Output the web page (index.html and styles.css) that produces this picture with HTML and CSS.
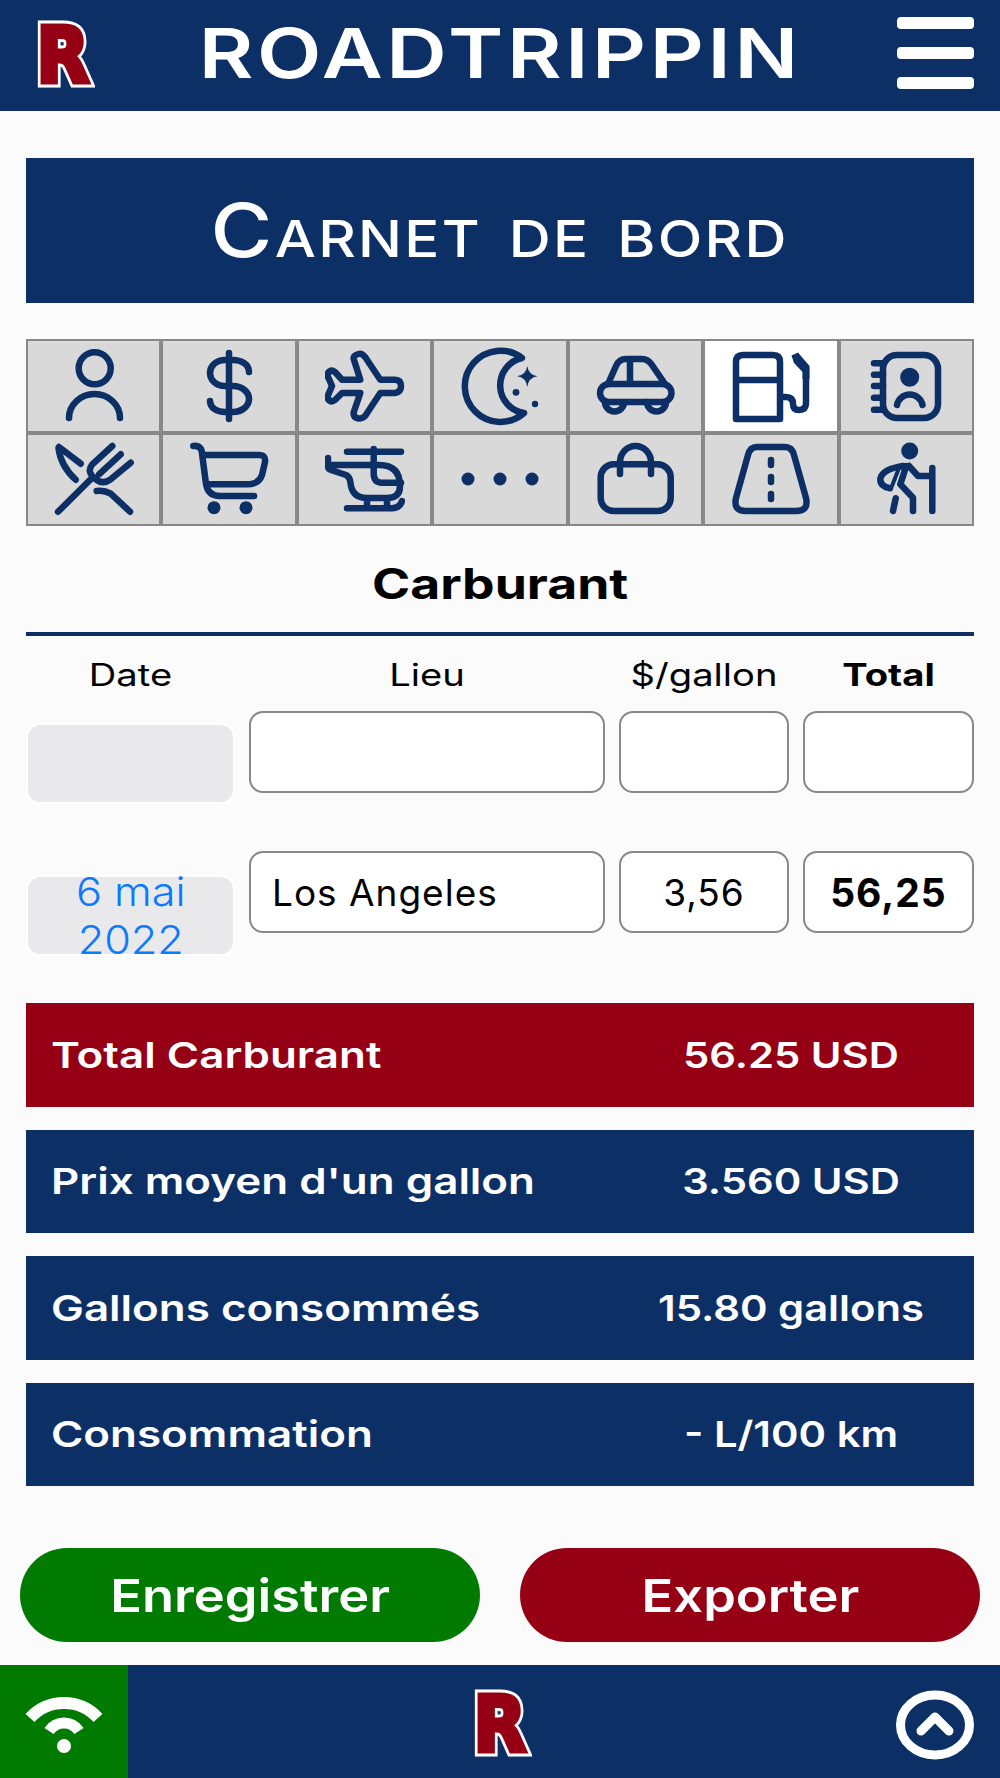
FILE: index.html
```html
<!DOCTYPE html>
<html lang="fr">
<head>
    <title>Roadtrippin - Carnet de bord</title>
    <link rel="stylesheet" href="styles.css">
</head>
<body>
    <header class="top-bar">
        <span class="logo">R</span>
        <div class="app-name">ROADTRIPPIN</div>
        <div class="burger"><span></span><span></span><span></span></div>
    </header>

    <main class="content">
        <h1 class="page-title"><span class="wide"><span class="big-c">C</span>arnet de bord</span></h1>

        <div class="tabs">
            <div class="tab"><svg viewBox="0 0 80 80"><circle cx="40.7" cy="22.3" r="16"/><path d="M15 72 A25.5 24 0 0 1 66 72"/></svg></div>
            <div class="tab"><svg viewBox="0 0 80 80"><path d="M40 7 V73 M60 26 C60 18 52 14 44 14 H36 C27 14 21 20 21 27 C21 34 27 40 36 40 H44 C53 40 60 46 60 53 C60 60 53 66 44 66 H36 C28 66 21 62 21 55"/></svg></div>
            <div class="tab"><svg viewBox="0 0 80 80"><path d="M70 33.7 H55.3 L40.3 11.3 Q37 7 33.5 8 Q28 9.5 28.7 13 L35.3 33.7 H17 L10 26 Q6 23 3 27 Q2 30 4 33 L7 40 L4 47 Q2 51 3 53 Q6 57 10 54 L17 47 H35.3 L28.7 66.3 Q28 71 33 72.5 Q37 73 40.3 69.7 L55.3 47 H70 Q76 46 76 40 Q76 34 70 33.7 Z"/></svg></div>
            <div class="tab"><svg viewBox="0 0 80 80"><path d="M62 12 A35.6 35.6 0 1 0 64 67 A28 28 0 0 1 62 12 Z"/><path class="solid" d="M67.3 20 Q68.5 29 77.5 30.3 Q68.5 31.5 67.3 41 Q66 31.5 57 30.3 Q66 29 67.3 20 Z"/><circle class="solid" cx="56" cy="46.3" r="3.4"/><circle class="solid" cx="75" cy="58" r="3.2"/></svg></div>
            <div class="tab"><svg viewBox="0 0 80 80"><rect x="5" y="38" width="71.5" height="18" rx="9"/><path d="M13 38 L21 20 Q24 13 31 13 H47 Q53 13 57 19 L70 38 M35 13 V37 M10 56 A9.5 9.5 0 0 0 29 56 M52 56 A9.5 9.5 0 0 0 71 56"/></svg></div>
            <div class="tab active"><svg viewBox="0 0 80 80"><path d="M5 73 V16 Q5 9 12 9 H42 Q49 9 49 16 V73 Z M5 34 H49 M50 51 H55 Q62 51 62 58 Q62 64 68 64 Q75 64 75 57 V24"/><path class="solid" d="M60.5 9.5 L67 6.5 L78.5 20 V33 H71.5 V26 L63 17 Z"/></svg></div>
            <div class="tab"><svg viewBox="0 0 80 80"><rect x="17" y="9" width="55" height="63" rx="14"/><path d="M8 17.3 H17 M8 28.7 H17 M8 40 H17 M8 51.7 H17 M8 63.7 H17 M31 59 A13 13 0 0 1 56.5 59"/><circle class="solid" cx="43.7" cy="31.3" r="9.5"/></svg></div>

            <div class="tab"><svg viewBox="0 0 80 80"><path d="M5 8 L26.7 24.7 M4.5 9 Q6.7 27 21.7 40.7 M42.7 52 Q50 51 56.7 54.7 L76 72.7 M4 72.7 L36.7 40.3 M58.3 7 L38.3 25.3 Q32 33 41.7 40.3 Q49 46 56.7 40.3 L76.7 23.7 M66.7 15.3 L45 35.3"/></svg></div>
            <div class="tab"><svg viewBox="0 0 80 80"><path d="M4.3 7 Q11 6 12.7 12 L17 45 Q19 57 31 57 H65 M14.3 16 H70 Q77 16 76 23 L73 36 Q70 45.3 58 45.3 H17.7"/><circle class="solid" cx="25" cy="68.7" r="6.5"/><circle class="solid" cx="57" cy="68.7" r="6.5"/></svg></div>
            <div class="tab"><svg viewBox="0 0 80 80"><path d="M22 12.7 H76 M48.7 10 V35 Q49 43.7 57 43.7 H76 M3 19 V27 Q3 30 6 31 L21 36 Q25 38 25.5 44 Q27 59 42 59 H62 Q75 59 75 47 Q75 26 54 26 H3 M22 69.3 H67 Q75 69 77 62 M42 59 V69 M62 59 V69"/></svg></div>
            <div class="tab"><svg viewBox="0 0 80 80"><circle class="solid" cx="8" cy="40" r="6.5"/><circle class="solid" cx="40" cy="40" r="6.5"/><circle class="solid" cx="72" cy="40" r="6.5"/></svg></div>
            <div class="tab"><svg viewBox="0 0 80 80"><rect x="5.7" y="25.3" width="70" height="46.7" rx="13"/><path d="M25 35 V23 A15.5 16 0 0 1 56 23 V35"/></svg></div>
            <div class="tab"><svg viewBox="0 0 80 80"><path d="M26 8 H54 Q61 8 63 16 L75 59 Q78 72 65 72 H15 Q2 72 5 59 L17 16 Q19 8 26 8 Z M40 21 V26 M40 38 V43 M40 55 V60"/></svg></div>
            <div class="tab"><svg viewBox="0 0 80 80"><path d="M66.3 29 V72 M37 27 Q17 30 14.5 39 Q13 47 24 49.3 M40.3 27 L34.3 45.3 L47 58.7 V72 M43 27 L52 37 H65 M29.7 59.3 L27 72"/><path class="thin" d="M33 29 L26 47"/><circle class="solid" cx="43.7" cy="12" r="8.5"/></svg></div>
        </div>

        <h2 class="section-title"><span class="wide">Carburant</span></h2>

        <div class="table-head">
            <div>Date</div>
            <div>Lieu</div>
            <div>$/gallon</div>
            <div class="strong">Total</div>
        </div>

        <div class="row">
            <div class="date-box first"></div>
            <input class="field" type="text" value="">
            <input class="field" type="text" value="">
            <input class="field" type="text" value="">
        </div>

        <div class="row next">
            <div class="date-box second"><span class="date-text">6 mai<br>2022</span></div>
            <input class="field place" type="text" value="Los Angeles">
            <input class="field" type="text" value="3,56">
            <input class="field strong" type="text" value="56,25">
        </div>

        <div class="summary">
            <div class="sum-row red"><span class="sum-label">Total Carburant</span><span class="sum-value">56.25 USD</span></div>
            <div class="sum-row"><span class="sum-label">Prix moyen d'un gallon</span><span class="sum-value">3.560 USD</span></div>
            <div class="sum-row"><span class="sum-label">Gallons consommés</span><span class="sum-value">15.80 gallons</span></div>
            <div class="sum-row"><span class="sum-label">Consommation</span><span class="sum-value">- L/100 km</span></div>
        </div>

        <div class="actions">
            <button class="btn save"><span class="btn-text">Enregistrer</span></button>
            <button class="btn export"><span class="btn-text">Exporter</span></button>
        </div>
    </main>

    <footer class="bottom-bar">
        <div class="wifi">
            <svg viewBox="0 0 128 113" width="128" height="113"><path d="M30 53 A46 46 0 0 1 98 53" stroke-width="12"/><path d="M49 66 A18 18 0 0 1 79 66" stroke-width="11"/><circle cx="64" cy="81" r="7"/></svg>
        </div>
        <span class="logo">R</span>
        <div class="to-top">
            <svg viewBox="0 0 78 70" width="78" height="70"><ellipse cx="39" cy="35" rx="34.5" ry="30"/><path d="M25 41 L39 27 L53 41"/></svg>
        </div>
    </footer>
</body>
</html>
```

FILE: styles.css
```css
* {
    box-sizing: border-box;
}

body {
    margin: 0;
    background-color: #fbfbfb;
    font-family: Inter, "Liberation Sans", sans-serif;
    color: #000;
}

.top-bar {
    display: grid;
    grid-template-columns: 1fr auto 1fr;
    align-items: center;
    height: 111px;
    padding: 0 26px;
    background-color: #0c2f66;
}

/* the R is drawn twice: white halo behind, red letter on top */
.logo {
    position: relative;
    display: inline-flex;
    justify-content: center;
    justify-self: start;
    width: 56px;
    margin-left: 9px;
    font-family: "DejaVu Sans", sans-serif;
    font-size: 77px;
    font-weight: bold;
    line-height: 1;
    color: #950014;
    -webkit-text-stroke: 5px #950014;
    transform: scaleX(0.89);
}

.logo::before {
    content: "R";
    position: absolute;
    z-index: -1;
    -webkit-text-stroke: 11px #fff;
}

.bottom-bar .logo {
    justify-self: center;
    margin: 5px 0 0 0;
}

.app-name {
    font-size: 69px;
    font-weight: 600;
    line-height: 1;
    letter-spacing: 3px;
    margin-bottom: 5px;
    color: #fff;
    transform: scaleX(1.215);
}

.burger {
    display: flex;
    flex-direction: column;
    justify-self: end;
    gap: 18px;
    width: 77px;
    margin-bottom: 5px;
}

.burger span {
    height: 12px;
    border-radius: 4px;
    background-color: #fff;
}

.content {
    padding: 47px 26px 0;
}

.wide {
    display: inline-block;
}

.page-title {
    display: flex;
    justify-content: center;
    height: 145px;
    margin: 0;
    padding-top: 35px;
    background-color: #0c2f66;
    font-size: 51px;
    font-weight: 500;
    line-height: 1.3;
    letter-spacing: 2px;
    word-spacing: 8px;
    text-transform: uppercase;
    color: #fff;
}

.page-title .wide {
    transform: scaleX(1.14);
}

.big-c {
    font-size: 74px;
    line-height: 1;
}

.tabs {
    display: grid;
    grid-template-columns: repeat(7, 1fr);
    grid-auto-rows: 93.5px;
    margin-top: 36px;
}

.tab {
    display: flex;
    align-items: center;
    justify-content: center;
    border: 2.5px solid #888;
    background-color: #d9d9d9;
}

.tab.active {
    background-color: #fff;
}

.tab svg {
    width: 80px;
    height: 80px;
    fill: none;
    stroke: #0c2f66;
    stroke-width: 6.5;
    stroke-linecap: round;
    stroke-linejoin: round;
}

.tab svg .solid {
    fill: #0c2f66;
    stroke: none;
}

.tab svg .thin {
    stroke-width: 4;
}

.section-title {
    display: flex;
    align-items: center;
    justify-content: center;
    height: 110px;
    margin: 0;
    padding-top: 8px;
    border-bottom: 4px solid #0c2f66;
    font-size: 42px;
    font-weight: 700;
}

.section-title .wide {
    transform: scaleX(1.23);
}

.table-head,
.row {
    display: grid;
    grid-template-columns: 209px 356px 170px 171px;
    column-gap: 14px;
}

.table-head {
    align-items: center;
    height: 76px;
    font-size: 31px;
    text-align: center;
}

.table-head div {
    transform: scaleX(1.23);
}

.strong {
    font-weight: bold;
}

.row {
    height: 80px;
}

.row.next {
    margin-top: 60px;
}

.date-box {
    display: flex;
    align-items: center;
    justify-content: center;
    width: 209px;
    height: 81px;
    border: 2px solid #fff;
    border-radius: 14px;
    background-color: #e9e9eb;
    font-size: 40px;
    font-weight: 300;
    line-height: 48px;
    text-align: center;
    color: #0a7aff;
}

.date-box.first {
    margin-top: 11px;
}

.date-box.second {
    margin-top: 23px;
}

.date-text {
    transform: scaleX(1.08);
}

.field {
    width: 100%;
    height: 82px;
    margin-top: -1px;
    padding: 0 8px;
    border: 2.5px solid #888;
    border-radius: 14px;
    background-color: #fff;
    font-family: Inter, "Liberation Sans", sans-serif;
    font-size: 37px;
    letter-spacing: 1px;
    text-align: center;
    color: #000;
}

.field.strong {
    font-size: 39px;
}

.field.place {
    padding-left: 21px;
    text-align: left;
}

.summary {
    display: flex;
    flex-direction: column;
    gap: 23px;
    margin-top: 71px;
}

.sum-row {
    display: grid;
    grid-template-columns: 1fr 310px;
    align-items: center;
    height: 103.5px;
    padding: 0 28px 0 25px;
    background-color: #0c2f66;
    font-size: 36px;
    font-weight: 600;
    color: #fff;
}

.sum-row.red {
    background-color: #950014;
}

.sum-label {
    transform: scaleX(1.22);
    transform-origin: left center;
}

.sum-value {
    text-align: center;
    transform: scaleX(1.16);
}

.actions {
    display: flex;
    justify-content: space-between;
    margin: 62px -6px 0;
}

.btn {
    width: 460px;
    height: 94px;
    border: none;
    border-radius: 47px;
    font-family: Inter, "Liberation Sans", sans-serif;
    font-size: 45px;
    font-weight: 600;
    color: #fff;
}

.btn-text {
    display: inline-block;
    transform: scaleX(1.165);
}

.btn.save {
    background-color: #007a00;
}

.btn.export {
    background-color: #950014;
}

.bottom-bar {
    display: grid;
    grid-template-columns: 128px 1fr 128px;
    justify-items: center;
    align-items: center;
    height: 113px;
    margin-top: 23px;
    background-color: #0c2f66;
}

.wifi {
    height: 113px;
    background-color: #007a00;
}

.wifi svg {
    display: block;
    fill: none;
    stroke: #fff;
}

.wifi circle {
    fill: #fff;
    stroke: none;
}

.to-top {
    justify-self: end;
    height: 70px;
    margin: 6px 26px 0 0;
}

.to-top svg {
    display: block;
    fill: none;
    stroke: #fff;
    stroke-width: 9;
    stroke-linecap: round;
    stroke-linejoin: round;
}
```
